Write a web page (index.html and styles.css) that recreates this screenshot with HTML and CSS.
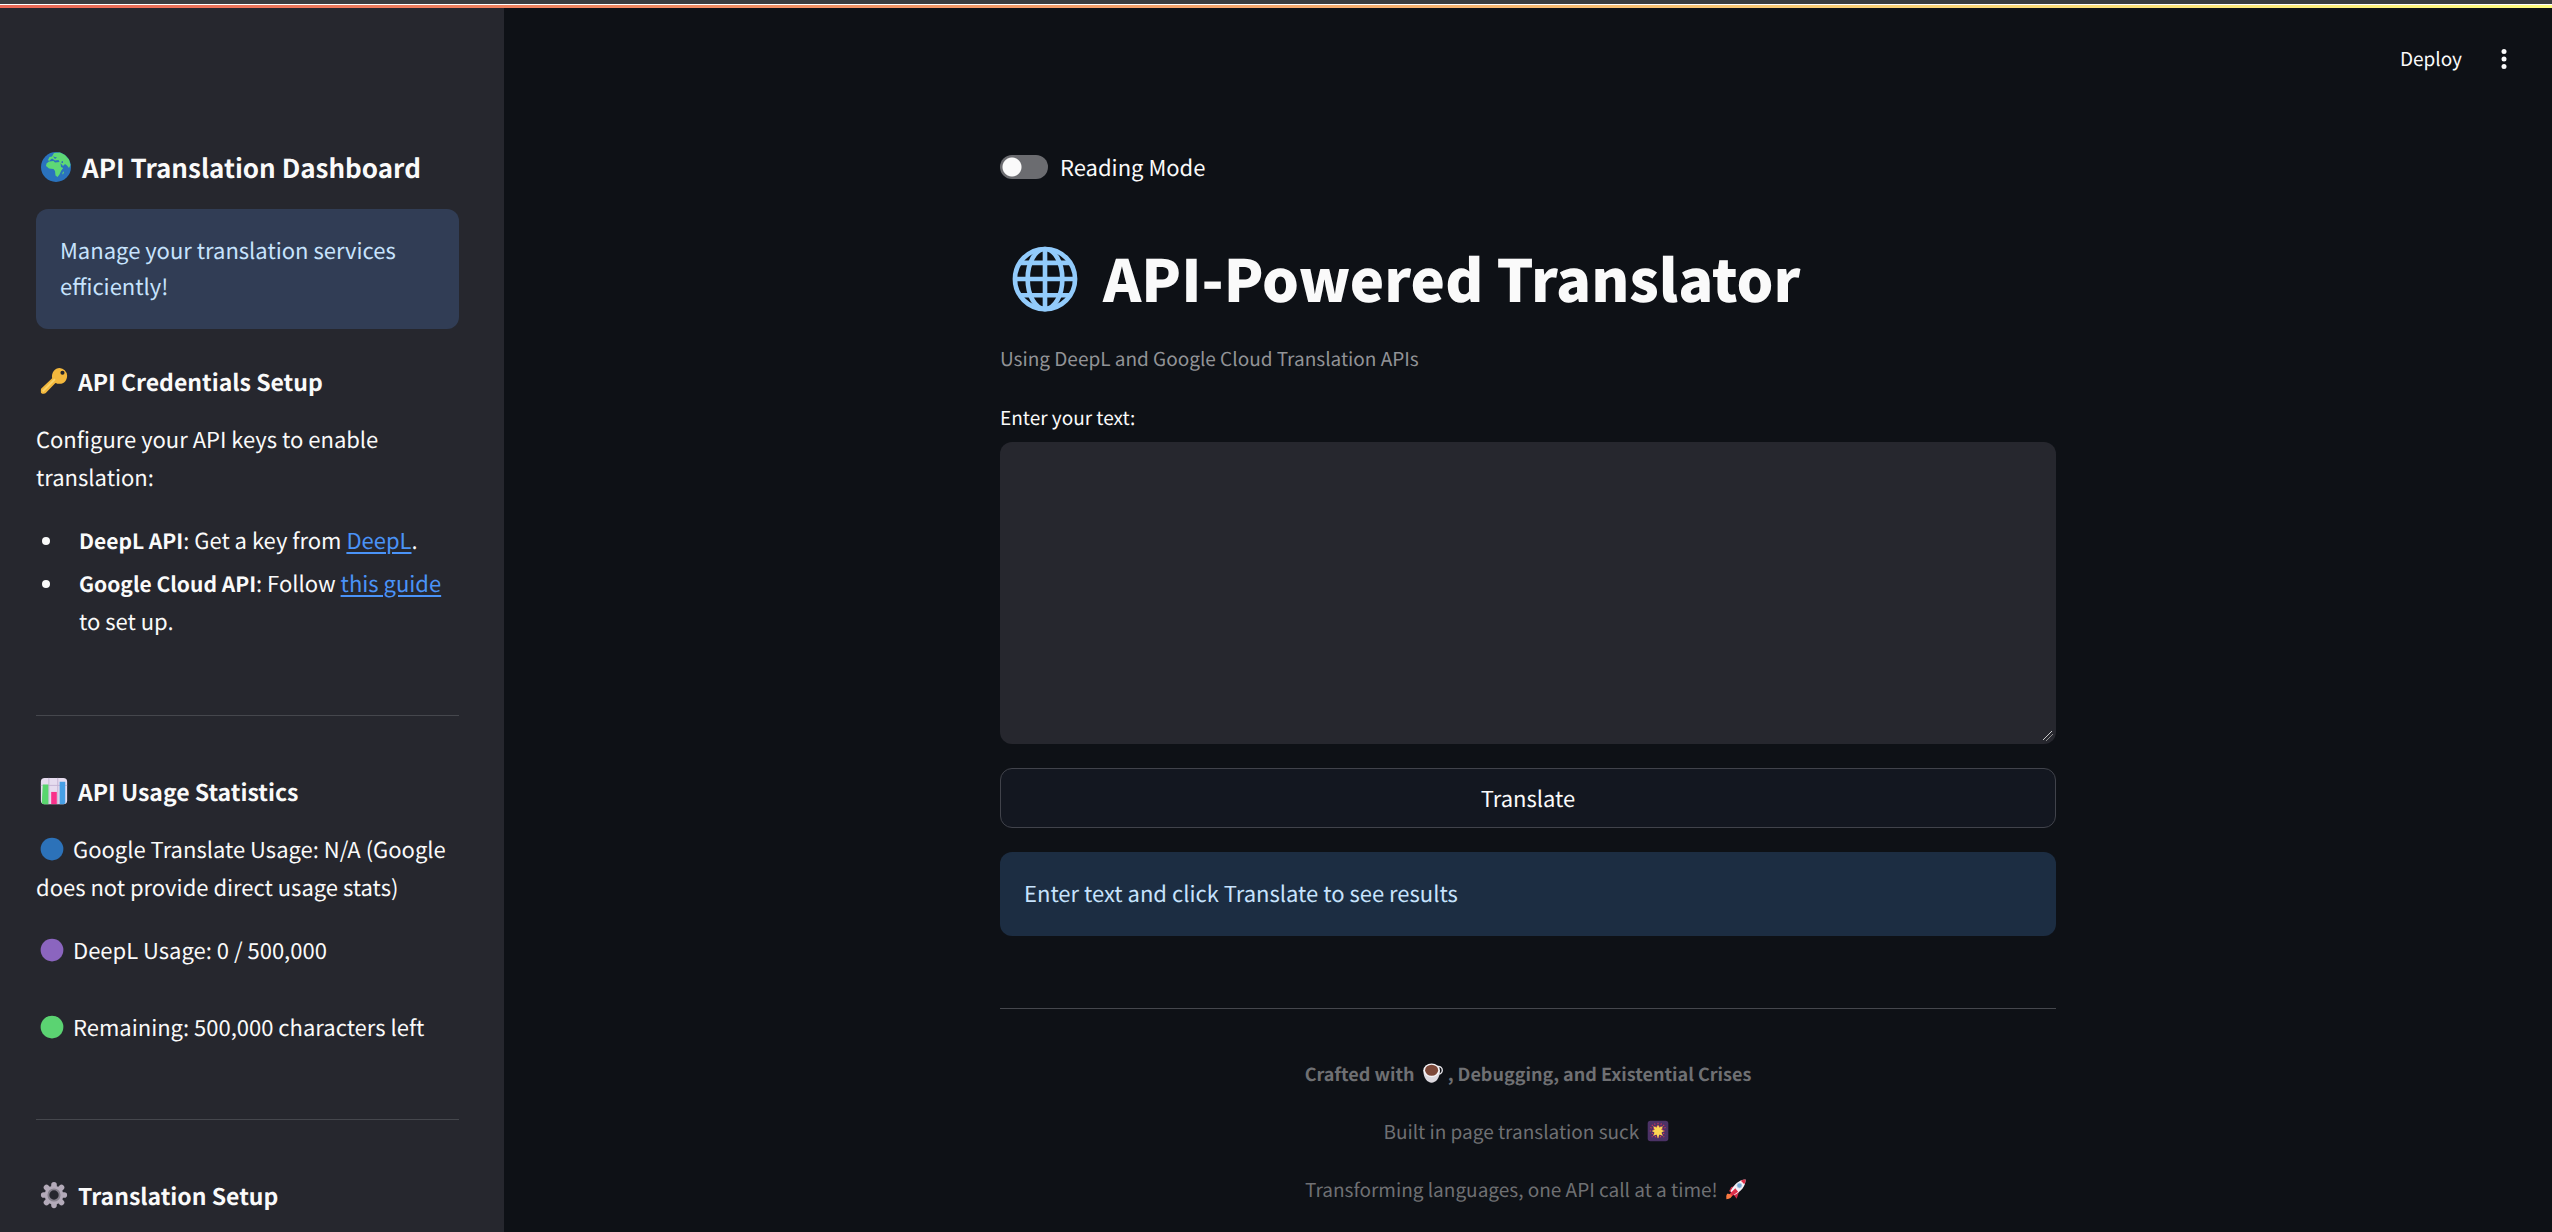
FILE: index.html
```html
<!DOCTYPE html>
<html lang="en">
<head>
<meta charset="utf-8">
<meta name="viewport" content="width=device-width, initial-scale=1">
<title>API-Powered Translator</title>
<link rel="stylesheet" href="styles.css">
</head>
<body>
<div class="decoration"></div>
<div class="app">
  <aside class="sidebar">
    <h2 class="side-title">
      <svg class="emoji" viewBox="0 0 32 32" role="img" aria-label="Globe"><circle cx="16" cy="16" r="15" fill="#2a72bd"/><path fill="#5ed875" d="M14 2 20 1.5 25 4 29 8.500 30.500 14 29 17 27 14.5 25 13 23 15 20.5 12 21 16 23.2 17 21 20 19.5 23.5 17.5 26 15.5 24.500 15 20 13.5 18 9 17.500 6 15 6.500 12.500 9 10.500 13.500 10 15 11.500 19.500 11 18.500 9 15 9.500 12 7.500 9 10 8 9 9.500 6 12 5.500Z"/><path fill="#2a72bd" d="M13 5.500 17 6.500 15 8ZM21.500 10.500 23 10 23 12 21.500 12Z"/><path fill="#5ed875" d="M23 20.500 24 21 23 23.500 22.300 23Z"/></svg>API Translation Dashboard
    </h2>
    <div class="alert side-alert">Manage your translation services efficiently!</div>

    <h3 class="side-heading">
      <svg class="emoji" viewBox="0 0 32 32" role="img" aria-label="Key"><path fill="#f3b83d" fill-rule="evenodd" d="M22 2a9 9 0 0 1 8 8c0 5-3 9-8 9-2 0-3-.5-4.500-1L7.500 28.500c-1.500 1.500-5.500 1.500-5.500-.500v-2.500c0-1 .5-1.500 1-2L14 13c-1-6 3-11 8-11Zm3 3a2.200 2.200 0 1 0 .1 4.400A2.200 2.200 0 0 0 25 5Z"/><path d="M4 27 17 14" stroke="#f9d46a" stroke-width="2"/></svg>API Credentials Setup
    </h3>
    <p>Configure your API keys to enable translation:</p>
    <ul class="keys">
      <li><strong>DeepL API</strong>: Get a key from <a href="#deepl">DeepL</a>.</li>
      <li><strong>Google Cloud API</strong>: Follow <a href="#guide">this guide</a> to set up.</li>
    </ul>
    <hr>

    <h3 class="side-heading">
      <svg class="emoji" viewBox="0 0 32 32" role="img" aria-label="Bar chart"><rect x="2" y="2" width="28" height="28" rx="4" fill="#e6dcef"/><path d="M10.500 2V30M20 2V30M2 10H30" stroke="#c4b3d3" fill="none"/><path fill="#59d56e" d="M4 9H10V30H5Q3 30 3 28Z"/><path fill="#f8318a" d="M13 17H19V30H13Z"/><path fill="#479fe5" d="M22 6H28V28Q28 30 26 30H22Z"/></svg>API Usage Statistics
    </h3>
    <p><svg class="emoji" viewBox="0 0 32 32" role="img" aria-label="Blue circle"><circle cx="16" cy="16" r="14" fill="#2c72b9"/></svg>Google Translate Usage: N/A (Google does not provide direct usage stats)</p>
    <p><svg class="emoji" viewBox="0 0 32 32" role="img" aria-label="Purple circle"><circle cx="16" cy="16" r="14" fill="#8b65bf"/></svg>DeepL Usage: 0 / 500,000</p>
    <p class="remaining"><svg class="emoji" viewBox="0 0 32 32" role="img" aria-label="Green circle"><circle cx="16" cy="16" r="14" fill="#5bd372"/></svg>Remaining: 500,000 characters left</p>
    <hr>

    <h3 class="side-heading">
      <svg class="emoji" viewBox="0 0 32 32" role="img" aria-label="Gear"><g stroke="#b3aab9" stroke-width="6" stroke-linecap="round"><path d="M16 5V27M5 16H27M8 8 24 24M24 8 8 24"/></g><circle cx="16" cy="16" r="10" fill="#b3aab9"/><circle cx="16" cy="16" r="6" fill="#26272e" stroke="#85808c" stroke-width="2"/></svg>Translation Setup
    </h3>
  </aside>

  <div class="page">
    <header class="toolbar">
      <button class="deploy" type="button">Deploy</button>
      <button class="more" type="button" aria-label="Main menu"><svg viewBox="0 0 24 24"><circle cx="12" cy="4.500" r="2.500"/><circle cx="12" cy="12" r="2.500"/><circle cx="12" cy="19.500" r="2.500"/></svg></button>
    </header>
    <main class="content">
      <label class="toggle"><input type="checkbox" role="switch">Reading Mode</label>
      <h1>
        <svg class="emoji" viewBox="0 0 32 32" role="img" aria-label="Globe with meridians"><g fill="none" stroke="#92cbfb" stroke-width="2"><circle cx="16" cy="16" r="13"/><ellipse cx="16" cy="16" rx="7.500" ry="13"/><path d="M16 3V29M3 16H29M5 9H27M5 23H27"/></g></svg>API-Powered Translator
      </h1>
      <p class="caption">Using DeepL and Google Cloud Translation APIs</p>
      <label class="field-label" for="source">Enter your text:</label>
      <textarea id="source"></textarea>
      <button class="translate" type="button">Translate</button>
      <div class="alert main-alert">Enter text and click Translate to see results</div>
      <hr>
      <footer>
        <p><strong>Crafted with <svg class="emoji" viewBox="0 0 32 32" role="img" aria-label="Coffee"><circle cx="24" cy="12" r="5.500" fill="none" stroke="#e3e1e6" stroke-width="2"/><path d="M2 12C2 36 26 36 26 12Z" fill="#ddd9df"/><ellipse cx="14" cy="12" rx="12" ry="10" fill="#f5f3f6"/><ellipse cx="14" cy="12" rx="9.500" ry="8" fill="#7c4839"/></svg>, Debugging, and Existential Crises</strong></p>
        <p>Built in page translation suck <svg class="emoji" viewBox="0 0 32 32" role="img" aria-label="Fireworks"><rect x="1" y="1" width="30" height="30" rx="4" fill="#4b3266"/><path d="M16 4V28M4 16H28M7 7 25 25M25 7 7 25M11 5 21 27M21 5 11 27M5 11 27 21M27 11 5 21" stroke="#db3658" stroke-width="1.500" stroke-dasharray="2 2"/><path fill="#fcd753" d="m16 7 2 4 5-2-2 5 4 2-4 2 2 5-5-2-2 6-2-6-5 2 2-5-4-2 4-2-2-5 5 2Z"/></svg></p>
        <p>Transforming languages, one API call at a time! <svg class="emoji" viewBox="0 0 32 32" role="img" aria-label="Rocket"><path fill="#cc2947" d="m9 13 7-1 4 9-3 9-4-5-7-6Z"/><path fill="#f4f0f7" d="M30 2C21 2 13 9 8 19l5 6C23 20 30 12 30 2Z"/><path fill="#df2e49" d="M30 2q-4 0-7 2l5 5q2-3 2-7ZM15 15 5 25l3 3 11-8Z"/><circle cx="21" cy="11" r="3.500" fill="#78a9d5" stroke="#adc9e2"/><path fill="#fb7941" d="M3 23q4-1 7 2 0 5-8 6-1-5 1-8Z"/></svg></p>
      </footer>
    </main>
  </div>
</div>
</body>
</html>
```
FILE: styles.css
```css
* { box-sizing: border-box; }

body {
  margin: 0;
  height: 100vh;
  display: flex;
  flex-direction: column;
  overflow: hidden;
  background: #0e1116;
  color: #fafafa;
  color-scheme: dark;
  font: 22px/38px "Noto Sans CJK SC", "Noto Sans", sans-serif;
  text-rendering: geometricPrecision;
}

button, textarea { font: inherit; color: inherit; text-rendering: inherit; }
h1, h2, h3, p, ul { margin: 0; }

hr {
  width: 100%;
  height: 1px;
  margin: 0;
  border: 0;
  background: #45474d;
}

a { color: #4a93f8; text-underline-offset: 3px; text-decoration-thickness: 2px; }

.decoration {
  flex: none;
  height: 8px;
  border-top: 4px solid #3a3d40;
  background: linear-gradient(#fff, #fff) top / 100% 1px no-repeat, linear-gradient(90deg, #e96855, #f5a86d 50%, #fffd80);
}

.app { flex: 1; min-height: 0; display: flex; }

.emoji {
  width: 1em;
  height: 1em;
  margin: 0 8px 0 4px;
  vertical-align: -3px;
}

/* Sidebar */
.sidebar {
  flex: none;
  width: 504px;
  padding: 142px 45px 0 36px;
  overflow: hidden;
  background: #26272e;
}

.side-title { font-size: 26px; line-height: 36px; font-weight: 700; }
.side-title .emoji { width: 32px; height: 32px; margin-right: 10px; vertical-align: -5px; }
.side-heading { font-size: 23px; line-height: 32px; font-weight: 700; margin-bottom: 23px; }
.side-heading .emoji { width: 30px; height: 30px; margin: 0 9px 0 3px; vertical-align: -5px; }
.sidebar p { margin-bottom: 25px; }
.sidebar p .emoji { width: 26px; height: 26px; margin-left: 3px; vertical-align: -4px; }
.sidebar hr { margin-bottom: 59px; }

.alert {
  padding: 23px 24px 25px;
  border-radius: 12px;
  line-height: 36px;
  color: #c7e3fd;
}

.side-alert { margin: 23px 0 36px; background: #313d55; }

.keys { padding: 0; margin-bottom: 75px; list-style: none; }
.keys strong { font-size: 21px; line-height: 1; }
.keys li { position: relative; padding-left: 43px; }
.keys li::before {
  content: "";
  position: absolute;
  left: 6px;
  top: 16px;
  width: 8px;
  height: 8px;
  border-radius: 50%;
  background: #fafafa;
}
.keys li + li { margin-top: 5px; }
.sidebar .remaining { margin: 39px 0 73px; }

/* Page */
.page { flex: 1; min-width: 0; }

.toolbar {
  display: flex;
  justify-content: flex-end;
  align-items: center;
  gap: 30px;
  height: 102px;
  padding: 0 36px 0 0;
}

.toolbar button { padding: 0; border: 0; background: none; }
.deploy { font-size: 19px; }
.more { width: 24px; height: 24px; }
.more svg { display: block; fill: #fafafa; }

.content {
  display: flex;
  flex-direction: column;
  width: 100%;
  max-width: 1056px;
  margin: 0 auto;
  padding-top: 38px;
}

.toggle { display: flex; align-items: center; gap: 12px; line-height: 38px; }

.toggle input {
  appearance: none;
  width: 48px;
  height: 24px;
  margin: 0;
  border-radius: 12px;
  background: radial-gradient(circle at 12px 12px, #fafafa 9px, transparent 10px) #6b6c70;
}

h1 { margin-top: 51px; font-size: 58px; line-height: 80px; font-weight: 900; }
h1 .emoji { width: 74px; height: 74px; margin: 0 21px 0 8px; vertical-align: -14px; }

.caption { margin-top: 26px; font-size: 19px; line-height: 32px; color: #929396; }
.field-label { margin-top: 28px; font-size: 19px; line-height: 30px; }

textarea {
  display: block;
  width: 100%;
  height: 302px;
  margin-top: 9px;
  padding: 18px;
  border: 0;
  border-radius: 12px;
  resize: vertical;
  background: #26272e;
}

textarea::-webkit-resizer {
  background: linear-gradient(135deg, transparent 42%, #c8c8c8 42% 50%, transparent 50% 62%, #8a8a8a 62% 67%, transparent 67%) 2px 2px / 10px 10px no-repeat;
}

.translate {
  height: 60px;
  margin: 24px 0;
  padding: 0;
  border: 1px solid #41434b;
  border-radius: 12px;
  background: #131720;
}

.main-alert { margin-bottom: 72px; background: #1c2d42; }

footer {
  padding-top: 48px;
  font-size: 19px;
  line-height: 34px;
  text-align: center;
  color: #6f7073;
}

footer strong { font-size: 18px; font-weight: 700; }
footer p { margin-bottom: 24px; }
footer .emoji { width: 22px; height: 22px; margin: 0 4px 0 3px; }
```
